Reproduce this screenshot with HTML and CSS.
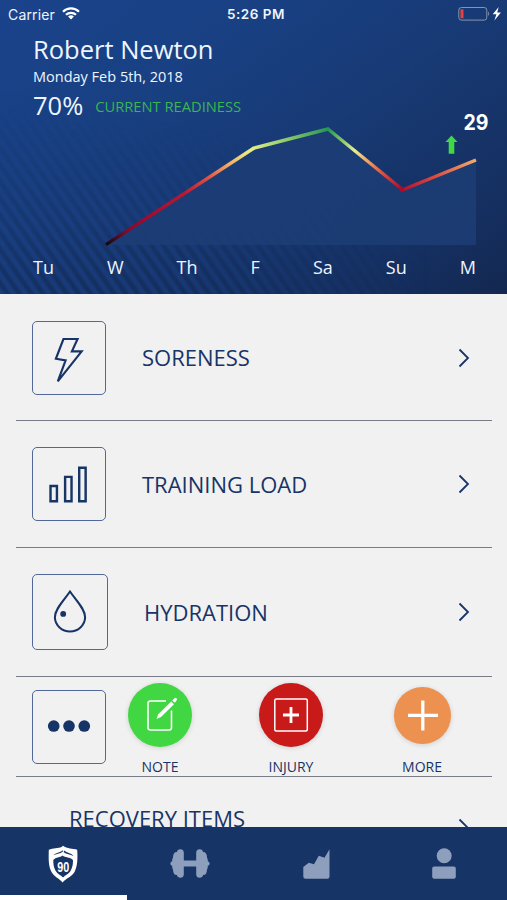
FILE: index.html
```html
<!DOCTYPE html>
<html lang="en">
<head>
<meta charset="utf-8">
<title>Readiness</title>
<link rel="stylesheet" href="styles.css">
</head>
<body>
<div class="app">
  <header class="hero">
    <div class="status">
      <div class="status-left">
        <span>Carrier</span>
        <svg width="18" height="13" viewBox="0 0 18 13" fill="none" stroke="#fff" stroke-width="2.2"><path d="M1 4.7a11.5 11.5 0 0 1 16 0M4 7.8a7.2 7.2 0 0 1 10 0"/><path d="M9 12.4L6.1 9.6a4.2 4.2 0 0 1 5.8 0z" fill="#fff" stroke="none"/></svg>
      </div>
      <strong class="clock">5:26 PM</strong>
      <svg class="battery" width="44" height="15" viewBox="0 0 44 15"><rect x=".8" y=".5" width="28" height="12.6" rx="2.6" fill="none" stroke="#8695b2"/><rect x="2.5" y="2.3" width="3" height="9" rx=".6" fill="#e8413c"/><path d="M30.2 4.500q2 2.200 0 4.600z" fill="#8695b2"/><path d="M40.700 0L34.700 7.300h3.700l-2 6.200 6.500-8h-3.700z" fill="#fff"/></svg>
    </div>
    <h1 class="name">Robert Newton</h1>
    <p class="date">Monday Feb 5th, 2018</p>
    <div class="readiness"><span class="percent">70%</span><span class="caption">CURRENT READINESS</span></div>
    <svg class="chart" width="507" height="130" viewBox="0 120 507 130">
      <defs>
        <linearGradient id="g1" gradientUnits="userSpaceOnUse" x1="107" y1="244" x2="254" y2="148"><stop offset="0" stop-color="#160812"/><stop offset=".13" stop-color="#7d0d2d"/><stop offset=".27" stop-color="#a60a2c"/><stop offset=".53" stop-color="#b61a32"/><stop offset=".68" stop-color="#df4d43"/><stop offset=".82" stop-color="#f4a75f"/><stop offset=".94" stop-color="#eee382"/><stop offset="1" stop-color="#def08d"/></linearGradient>
        <linearGradient id="g2" gradientUnits="userSpaceOnUse" x1="254" y1="148" x2="328" y2="129"><stop offset="0" stop-color="#dcec88"/><stop offset=".5" stop-color="#83c665"/><stop offset="1" stop-color="#239655"/></linearGradient>
        <linearGradient id="g3" gradientUnits="userSpaceOnUse" x1="328" y1="129" x2="402" y2="190"><stop offset="0" stop-color="#239655"/><stop offset=".18" stop-color="#7fc665"/><stop offset=".36" stop-color="#e8ef91"/><stop offset=".52" stop-color="#f2a765"/><stop offset=".75" stop-color="#dd493e"/><stop offset="1" stop-color="#a50a2b"/></linearGradient>
        <linearGradient id="g4" gradientUnits="userSpaceOnUse" x1="402" y1="190" x2="476" y2="160"><stop offset="0" stop-color="#b50e2d"/><stop offset=".45" stop-color="#dc4c40"/><stop offset="1" stop-color="#f4ac68"/></linearGradient>
      </defs>
      <path d="M107 244L254 148L328 129L402 190L476 160V245H107z" fill="#1c3d75" fill-opacity=".85"/>
      <g fill="none" stroke-width="3.4" stroke-linecap="butt"><path d="M106 244.700L254 148" stroke="url(#g1)"/><path d="M401 189L402 190L476 160" stroke="url(#g4)"/><path d="M328 129L403 190" stroke="url(#g3)"/><path d="M253 148.500L254 148L328 129L329 130" stroke="url(#g2)"/></g>
      <path d="M451.500 135.500L457.500 142H454.300V153.700H448.700V142H445.500z" fill="#40d845"/>
      <text class="score" x="463.500" y="130" textLength="25" lengthAdjust="spacingAndGlyphs">29</text>
    </svg>
    <div class="days"><span>Tu</span><span>W</span><span>Th</span><span>F</span><span>Sa</span><span>Su</span><span>M</span></div>
  </header>

  <main class="list">
    <section class="row row-first">
      <svg class="tile" viewBox="0 0 74 74"><path d="M31.300 17.500H45.800L40 30.200H50L25.500 61L33.500 39.500L23.500 37.800z" fill="none" stroke="#173467" stroke-width="2.200"/></svg>
      <h2 class="label">SORENESS</h2>
      <svg class="chevron" viewBox="0 0 12 20"><path d="M1.500 1.500L10 10L1.500 18.500"/></svg>
    </section>
    <section class="row">
      <svg class="tile" viewBox="0 0 74 74"><g fill="none" stroke="#173467" stroke-width="2.500"><path d="M18 39h6.600v15.700h-6.600zM33 29.700h6.600v25h-6.600zM47.500 20.300h6.600v34.400h-6.600z"/></g></svg>
      <h2 class="label">TRAINING LOAD</h2>
      <svg class="chevron" viewBox="0 0 12 20"><path d="M1.500 1.500L10 10L1.500 18.500"/></svg>
    </section>
    <section class="row row-large">
      <svg class="tile" viewBox="0 0 76 76"><path d="M38 17C32 26 22.500 34.500 22.500 43.500C22.500 51.800 30 58 38 58S53.500 51.800 53.500 43.500C53.500 34.500 44 26 38 17z" fill="none" stroke="#173467" stroke-width="2.100"/><circle cx="31" cy="40" r="3" fill="#173467"/></svg>
      <h2 class="label">HYDRATION</h2>
      <svg class="chevron" viewBox="0 0 12 20"><path d="M1.500 1.500L10 10L1.500 18.500"/></svg>
    </section>
    <section class="row row-actions">
      <svg class="tile" viewBox="0 0 74 74"><g fill="#173467"><circle cx="21.300" cy="36" r="6"/><circle cx="37" cy="36" r="6"/><circle cx="52.700" cy="36" r="6"/></g></svg>
      <div class="actions">
        <div class="action">
          <div class="disc-slot"><svg class="disc note" viewBox="0 0 64 64"><path d="M38 18H22.500q-2.500 0-2.500 2.500V44.500q0 2.500 2.500 2.500H41q2.500 0 2.500-2.500V27.500" fill="none" stroke="#fff" stroke-width="1.600"/><path d="M28.500 36L30.300 31.200L43.200 18.600L46 21.300L33 34z" fill="#fff"/><path d="M44.200 17.500L46.500 15.200q1-.8 2 .1t.2 2L46.900 19.800z" fill="#fff"/></svg></div>
          <span>NOTE</span>
        </div>
        <div class="action">
          <div class="disc-slot"><svg class="disc injury" viewBox="0 0 64 64"><rect x="15.800" y="16" width="32.500" height="32" rx="1.500" fill="none" stroke="#fff" stroke-width="1.500"/><path d="M32 24V40M24 32H40" stroke="#fff" stroke-width="2.800"/></svg></div>
          <span>INJURY</span>
        </div>
        <div class="action">
          <div class="disc-slot"><svg class="disc more" viewBox="0 0 57 57"><path d="M28.800 13.500V43.500M14 28.300H44" stroke="#fff" stroke-width="3.300"/></svg></div>
          <span>MORE</span>
        </div>
      </div>
    </section>
    <section class="row row-recovery">
      <h2 class="label">RECOVERY ITEMS</h2>
      <svg class="chevron" viewBox="0 0 12 20"><path d="M1.500 1.500L10 10L1.500 18.500"/></svg>
    </section>
  </main>

  <nav class="tabs">
    <a class="tab active">
      <svg width="30" height="38" viewBox="0 0 30 38"><path d="M15 .8L13.500 2C10.500 3.500 5 3 .8 4.800C.5 15 .5 21 3.500 27C6 31.500 11 33.500 14.600 37.500C18 33.500 24 31.500 26.500 27C29.500 21 29.800 14 29.200 4.800C25 3.500 19 4 15 .8z" fill="#fff"/><path d="M5 10.300C8 7.700 11.500 7.500 15 5.200L14.800 6.800C12 9 8 9 5 10.300zM16 5.500L15.700 7.200C18.500 9.300 22 9 25.500 11C22.500 7.500 19.500 8 16 5.500zM5.300 15C8 12 12 12.500 14.500 10.500C17 12.500 22 12 25 15C25 19 24.500 22.500 22.500 26C20.700 29 17.500 30 15 32.500C12.500 30 9.500 29 7.700 26C5.600 22.500 5.300 19 5.300 15z" fill="#173467"/><text class="badge" x="9.200" y="26.500" textLength="12" lengthAdjust="spacingAndGlyphs">90</text></svg>
    </a>
    <a class="tab">
      <svg width="40" height="29" viewBox="0 0 40 29" fill="#8e9fbd"><path d="M13.800 3.500V11.500H26.200V3.500Q26.500.3 29.700.3Q32.600.3 33 3Q36.800 2.800 37 8.500Q38 10 37.800 12Q39.700 13 39.700 14.500T37.800 17Q38 19 37 20.500Q36.800 26.200 33 26Q32.600 28.700 29.700 28.700Q26.500 28.700 26.200 25.500V17.500H13.800V25.500Q13.500 28.700 10.300 28.700Q7.400 28.700 7 26Q3.200 26.200 3 20.500Q2 19 2.200 17Q.3 16 .3 14.500T2.200 12Q2 10 3 8.500Q3.200 2.800 7 3Q7.400.3 10.300.3Q13.500.3 13.800 3.500z"/></svg>
    </a>
    <a class="tab">
      <svg width="27" height="30" viewBox="0 0 27 30" fill="#8e9fbd"><path d="M26.500.3V27.500Q26.500 29.700 24.300 29.700H2.500Q.3 29.700 .3 27.500V18L5.800 13.700L11 15.300L15.800 6.800L21.500 8.700z"/></svg>
    </a>
    <a class="tab">
      <svg width="24" height="31" viewBox="0 0 24 31" fill="#8e9fbd"><circle cx="12.200" cy="7.700" r="7.500"/><rect x=".2" y="18.500" width="23.600" height="12.200" rx="2"/></svg>
    </a>
  </nav>
</div>
</body>
</html>
```
FILE: styles.css
```css
* { box-sizing: border-box; }

body {
  margin: 0;
  font-family: "Open Sans", "Noto Sans", sans-serif;
  color: #173467;
}

.app {
  width: 507px;
  height: 900px;
  display: flex;
  flex-direction: column;
  overflow: hidden;
  background: #f1f1f1;
}

svg { display: block; flex: none; }

h1, h2, p { margin: 0; font-weight: 400; }

.hero {
  position: relative;
  isolation: isolate;
  height: 294px;
  flex: none;
  color: #eef5ff;
  background:
    radial-gradient(ellipse 360px 110px at 30% 112%, rgba(18, 42, 86, .65), transparent),
    linear-gradient(144deg, #1a438c 0%, #184082 30%, #183a75 55%, #152f60 85%, #132850 100%);
}

.hero::before {
  content: "";
  position: absolute;
  inset: 0;
  z-index: -1;
  background: repeating-linear-gradient(55deg, rgba(28, 62, 130, .6) 0, rgba(28, 62, 130, .6) 3px, rgba(18, 42, 86, .45) 5px, rgba(18, 42, 86, .45) 7.700px, rgba(28, 62, 130, .6) 9.700px);
  mask-image: linear-gradient(11deg, #000 0%, rgba(0, 0, 0, .7) 20%, transparent 52%), linear-gradient(90deg, #000 35%, transparent 85%);
  mask-composite: intersect;
}

.status {
  height: 28px;
  padding: 0 5px 0 8px;
  display: grid;
  grid-template-columns: 1fr auto 1fr;
  align-items: center;
  font-family: Inter, sans-serif;
  font-size: 14px;
}

.status-left { display: flex; align-items: center; gap: 7px; letter-spacing: .15px; }
.status-left svg { margin-bottom: 2px; }
.clock { margin-left: 2px; font-size: 13.500px; font-weight: 600; letter-spacing: .5px; }
.battery { justify-self: end; }

.name { margin: 4px 0 0 33px; font-size: 25.500px; line-height: 34px; }
.date { margin: 1px 0 0 33px; font-size: 14.500px; line-height: 20px; }

.readiness {
  height: 33px;
  margin-left: 33px;
  display: flex;
  align-items: center;
  gap: 12px;
  line-height: 36px;
}

.percent { margin-top: 3px; font-size: 25.500px; }
.caption { margin-top: 5px; font-size: 14.700px; color: #38b650; }
.chart { overflow: visible; }

.score {
  font: 700 21px Inter, sans-serif;
  fill: #fff;
}

.days {
  margin: 4px 31px 0 33px;
  display: flex;
  justify-content: space-between;
  font-size: 18px;
  line-height: 26px;
}

.list { flex: 1; min-height: 0; overflow: hidden; padding: 0 15px 0 16px; }

.row {
  height: 127px;
  padding: 0 22px 0 16px;
  display: flex;
  align-items: center;
  border-bottom: 1px solid #777c86;
}

.row-first { padding-top: 1px; }

.tile {
  width: 74px;
  height: 74px;
  border: 1.500px solid #526899;
  border-radius: 5px;
}

.label { margin-left: 36px; font-size: 22px; line-height: 30px; }
.row-first .label { margin-top: -2px; }

.chevron {
  width: 12px;
  height: 20px;
  margin-left: auto;
  fill: none;
  stroke: #173467;
  stroke-width: 1.800;
}

.row-large { height: 129px; }
.row-large .tile { width: 76px; height: 76px; }

.row-actions { height: 100px; padding-right: 0; }

.actions { margin-left: 5px; display: flex; }
.action { width: 98px; display: flex; flex-direction: column; align-items: center; font-size: 14px; line-height: 19px; }
.action + .action { margin-left: 33px; }
.disc-slot { height: 80px; padding-bottom: 4px; display: grid; place-items: center; }
.disc { width: 64px; height: 64px; border-radius: 50%; box-shadow: 0 1px 5px rgba(0, 0, 0, .14); }
.note { background: #40d742; }
.injury { background: #c91a1a; }
.more { width: 57px; height: 57px; background: #ec914f; }

.row-recovery { height: 100px; align-items: flex-start; border-bottom: 0; }
.row-recovery .label { margin: 26px 0 0 37px; }
.row-recovery .chevron { margin-top: 41px; }

.tabs {
  height: 73px;
  flex: none;
  display: grid;
  grid-template-columns: repeat(4, 1fr);
  background: #173467;
}

.tab {
  height: 73px;
  display: grid;
  place-items: center;
  border-bottom: 5px solid transparent;
  padding-top: 5px;
}

.active { border-bottom-color: #fff; }

.badge {
  font: 700 15px "Liberation Sans", sans-serif;
  fill: #fff;
}
```
